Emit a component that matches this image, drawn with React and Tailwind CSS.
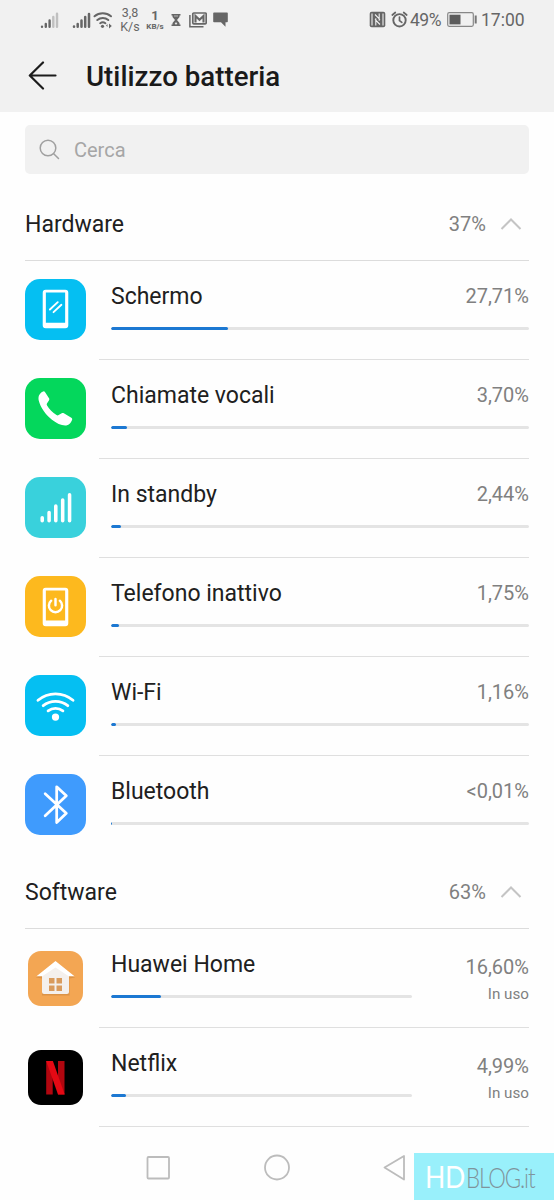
import React, { useState } from 'react';

const hardware = [
  { name: 'Schermo', percent: '27,71%', width: 27.9, icon: 'screen', color: 'bg-[#05bff2]' },
  { name: 'Chiamate vocali', percent: '3,70%', width: 3.8, icon: 'phone', color: 'bg-[#04d75c]' },
  { name: 'In standby', percent: '2,44%', width: 2.4, icon: 'signal', color: 'bg-[#39d1dc]' },
  { name: 'Telefono inattivo', percent: '1,75%', width: 1.8, icon: 'idle', color: 'bg-[#fdb91e]' },
  { name: 'Wi-Fi', percent: '1,16%', width: 1.2, icon: 'wifi', color: 'bg-[#05bff2]' },
  { name: 'Bluetooth', percent: '<0,01%', width: 0.2, icon: 'bluetooth', color: 'bg-[#3f9bfd]' },
];

const software = [
  { name: 'Huawei Home', percent: '16,60%', width: 16.7, icon: 'home', color: 'bg-[#f3a653]', status: 'In uso' },
  { name: 'Netflix', percent: '4,99%', width: 5.1, icon: 'netflix', color: 'bg-black', status: 'In uso' },
];

// Drawings inside the coloured tiles
const glyphs = {
  screen: (
    <svg viewBox="0 0 62 62" className="size-full" fill="none" stroke="#fff" strokeLinecap="round">
      <path d="M21 11h20a3 3 0 0 1 3 3v33a3 3 0 0 1-3 3H21a3 3 0 0 1-3-3V14a3 3 0 0 1 3-3zm0.200 2.700v30.800h19.600V13.700z" fill="#fff" fillRule="evenodd" stroke="none" />
      <path d="M25.300 31l8-7.500M29 33.700l8-7.500" strokeWidth="1.900" />
    </svg>
  ),
  phone: (
    <svg viewBox="0 0 62 62" className="size-full" fill="#fff">
      <path d="M14.300 17.500c.8-1.600 2.400-3.500 4.300-3.900.8-.2 1.300.1 1.700.7l4.100 6.400c.5.800.4 1.500-.1 2.200l-2 3.100c-.4.700-.3 1.300.1 2 2.300 4 5.600 7.300 9.600 9.700.8.500 1.500.5 2.200 0l3.100-1.900c.8-.5 1.500-.4 2.200 0l7.600 4.600c.9.600 1.100 1.300.7 2.200-.9 2.500-2.700 5-5.800 5.600-4.500.5-9.700-2-14.600-5.800-6.200-4.900-11.600-12.300-13.400-19.300-.5-2-.4-3.900.3-5.600z" />
    </svg>
  ),
  signal: (
    <svg viewBox="0 0 62 62" className="size-full" stroke="#fff" strokeWidth="3.600" strokeLinecap="round">
      <path d="M17.500 41.500v3M24.500 36v8.500M31.300 29.500v15M38.300 23.500v21M45.300 18v26.500" />
    </svg>
  ),
  idle: (
    <svg viewBox="0 0 62 62" className="size-full" fill="none" stroke="#fff" strokeLinecap="round">
      <path d="M21 12h20a3 3 0 0 1 3 3v33a3 3 0 0 1-3 3H21a3 3 0 0 1-3-3V15a3 3 0 0 1 3-3zm0.200 2.700v30.500h19.600V14.700z" fill="#fff" fillRule="evenodd" stroke="none" />
      <path d="M26.600 25.100a6.700 6.700 0 1 0 8.800 0M31 23.300v6.500" strokeWidth="2.500" />
    </svg>
  ),
  wifi: (
    <svg viewBox="0 0 62 62" className="size-full" fill="none" stroke="#fff" strokeWidth="2.900" strokeLinecap="round">
      <path d="M13.200 25.700a27.500 27.500 0 0 1 35.600 0M18.500 31.200a20 20 0 0 1 25 0M23.500 36.400a12.500 12.500 0 0 1 15 0" />
      <circle cx="31" cy="42.800" r="3.700" fill="#fff" stroke="none" />
    </svg>
  ),
  bluetooth: (
    <svg viewBox="0 0 62 62" className="size-full" fill="none" stroke="#fff" strokeWidth="2.800" strokeLinecap="round" strokeLinejoin="round">
      <path d="M20.500 20L42 40l-9.800 9.300V13L42 22.200 20.500 42.500" />
    </svg>
  ),
  home: (
    <svg viewBox="0 0 55 55" className="size-full">
      <path d="M8 26.500L27.500 12 47 26.500l-5.500 1V44.500H14V27.500z" fill="#d0893f" opacity=".65" />
      <path d="M14 24L27.500 13 41 24v17a2 2 0 0 1-2 2H16a2 2 0 0 1-2-2z" fill="#f4f0ed" />
      <path d="M27.500 10L46.500 25.200h-5.700L27.500 16.500 14.200 25.200H8.500z" fill="#fff" />
      <path d="M21 27h5.500v5.500H21zM28.500 27H34v5.500h-5.500zM21 34.500h5.500V40H21zM28.500 34.500H34V40h-5.500z" fill="#d99b5d" />
    </svg>
  ),
  netflix: (
    <svg viewBox="0 0 55 55" className="size-full">
      <rect x="18.200" y="11" width="6.500" height="33.500" fill="#b1060f" />
      <rect x="30" y="11" width="6.500" height="33.500" fill="#b1060f" />
      <rect x="18.200" y="0" width="6.700" height="33.500" fill="#e50914" transform="translate(0 11) skewX(19.400)" />
    </svg>
  ),
};

const StatusBar = () => (
  <div className="flex h-[39px] items-center pl-[40px] pr-[29px] text-[#666]">
    <svg width="19" height="18" viewBox="0 0 19 18" stroke="currentColor" strokeWidth="2.400" strokeLinecap="round" className="shrink-0">
      <path d="M2 15.700v.1M5.800 13v2.800M9.600 9.500v6.300" />
      <path d="M13.300 6v9.800M17 2.700v13.100" opacity=".35" />
    </svg>
    <svg width="19" height="18" viewBox="0 0 19 18" stroke="currentColor" strokeWidth="2.500" strokeLinecap="round" className="ml-[13px] shrink-0">
      <path d="M2 15.600v.1M5.700 13v2.700M9.500 9.500v6.200M13.200 6v9.700M17 3v12.700" />
    </svg>
    <svg width="20" height="18" viewBox="0 0 20 18" fill="none" stroke="currentColor" strokeWidth="2" strokeLinecap="round" className="ml-[2px] shrink-0">
      <path d="M1.500 5.300a12.800 12.800 0 0 1 16.500 0M4.300 9a8.600 8.600 0 0 1 11 0M7.200 12.200a4.500 4.500 0 0 1 5.200 0" />
      <circle cx="9.500" cy="15.300" r="1.600" fill="currentColor" stroke="none" />
      <path d="M13 14.500l1.500-1.500v3zM16 12.500l2.800 2.500-2.800 2.500z" fill="currentColor" stroke="none" />
    </svg>
    <div className="ml-[6px] w-[22px] text-center text-[12.500px] leading-[14px]">
      <div>3,8</div>
      <div>K/s</div>
    </div>
    <div className="ml-[4px] w-[20px] text-center font-bold">
      <div className="text-[13px] leading-[13px]">1</div>
      <div className="text-[8px] leading-[9px]">KB/s</div>
    </div>
    <svg width="10" height="12" viewBox="0 0 10 12" className="ml-[6px] shrink-0">
      <path d="M.5 0h9v1.500H8.500v1.500L6 6l2.500 3v1.500h1V12h-9v-1.500h1V9L4 6 1.500 3V1.500h-1z" fill="currentColor" />
      <path d="M3 2h4M4 10l1-1.500L6 10z" stroke="#f1f1f1" strokeWidth=".6" fill="#f1f1f1" />
    </svg>
    <svg width="18" height="16" viewBox="0 0 18 16" fill="none" stroke="currentColor" className="ml-[8px] shrink-0">
      <path d="M.9 3v11.800h13.600" strokeWidth="1.500" />
      <rect x="3.800" y="1" width="13.400" height="10.800" rx="1" strokeWidth="1.700" />
      <path d="M6.500 10.500V4l4 3.800 4-3.800v6.500" strokeWidth="2.100" />
    </svg>
    <svg width="15" height="15" viewBox="0 0 15 15" className="ml-[6px] shrink-0">
      <path d="M1 .5h13q.8 0 .8.800v8.200q0 .8-.8.800h-1.500v4.500L8 10.300H1q-.8 0-.8-.8V1.300Q.2.500 1 .500z" fill="currentColor" />
    </svg>
    <div className="ml-auto flex items-center">
      <svg width="17" height="17" viewBox="0 0 17 17" fill="none">
        <rect x=".7" y=".7" width="15.600" height="15.600" rx="2" fill="currentColor" />
        <path d="M3 2.500v12M14 2.500v12M6.800 7.200v7.300M10.200 2.500v7.300M6 3.500l5 5.200M6 8.300l5 5.200" stroke="#f1f1f1" strokeWidth="1.100" />
      </svg>
      <svg width="17" height="17" viewBox="0 0 17 17" fill="none" stroke="currentColor" strokeLinecap="round" className="ml-[5px]">
        <circle cx="8.500" cy="9.300" r="6.200" strokeWidth="1.900" />
        <path d="M8.500 6v3.600l2.300 1.800M1.300 4l3-2.500M15.700 4l-3-2.500" strokeWidth="1.700" />
      </svg>
      <span className="ml-[2px] w-[32px] whitespace-nowrap text-[17.500px] leading-5 tracking-[-0.5px]">49%</span>
      <svg width="31" height="15" viewBox="0 0 31 15" fill="none" className="ml-[5px]">
        <rect x=".7" y=".7" width="25.600" height="13.600" rx="1.500" stroke="#888" strokeWidth="1.200" />
        <rect x="2.500" y="2.700" width="11" height="9.700" fill="#5c5c5c" />
        <path d="M28.700 3.500v8" stroke="#777" strokeWidth="2" />
      </svg>
      <span className="ml-[3px] w-[44px] whitespace-nowrap text-[17.500px] leading-5">17:00</span>
    </div>
  </div>
);

const SectionHeader = ({ title, total, open, onToggle }) => (
  <button className="flex h-[74px] w-full items-center border-b border-[#dcdcdc] text-left" onClick={onToggle}>
    <span className="flex-1 pt-[3px] text-[23px] text-[#202020]">{title}</span>
    <span className="text-[20px] text-[#808080]">{total}</span>
    <svg width="22" height="14" viewBox="0 0 22 14" fill="none" stroke="#c4c4c4" strokeWidth="2" className={`ml-[14px] mr-[7px] ${open ? '' : 'rotate-180'}`}>
      <path d="M1.500 12L11 2.500l9.500 9.500" />
    </svg>
  </button>
);

const UsageRow = ({ item, last }) => (
  <div className="flex h-[99px]">
    <div className="flex w-[74px] shrink-0 pt-[18px]">
      {item.status ? (
        <div className={`ml-[3px] mt-1 size-[55px] overflow-hidden rounded-[13px] ${item.color}`}>{glyphs[item.icon]}</div>
      ) : (
        <div className={`size-[61px] overflow-hidden rounded-[15px] ${item.color}`}>{glyphs[item.icon]}</div>
      )}
    </div>
    <div className={`flex flex-1 border-b pl-[12px] ${last ? 'border-transparent' : 'border-[#dfdfdf]'}`}>
      <div className="flex-1">
        <div className="flex h-[66px] justify-between pt-[21px] leading-7">
          <span className="whitespace-nowrap pt-px text-[23px] text-[#202020]">{item.name}</span>
          {!item.status && <span className="text-[20px] text-[#808080]">{item.percent}</span>}
        </div>
        <div className="h-[3px] overflow-hidden rounded-full bg-[#e4e4e4]">
          <div className="h-full rounded-full bg-[#1c78d2]" style={{ width: `${item.width}%` }} />
        </div>
      </div>
      {item.status && (
        <div className="w-[117px] pt-6 text-right text-[#808080]">
          <div className="text-[20px] leading-7">{item.percent}</div>
          <div className="text-[15.200px] leading-[26px]">{item.status}</div>
        </div>
      )}
    </div>
  </div>
);

const App = () => {
  const [hardwareOpen, setHardwareOpen] = useState(true);
  const [softwareOpen, setSoftwareOpen] = useState(true);

  return (
    <div className="relative flex h-[1200px] w-[554px] flex-col overflow-hidden bg-[#fefefe] font-['Roboto',sans-serif]">
      <header className="h-[112px] shrink-0 bg-[#f1f1f1]">
        <StatusBar />
        <div className="flex h-[73px] items-center pl-[28px]">
          <svg width="29" height="30" viewBox="0 0 29 30" fill="none" stroke="#1c1c1c" strokeWidth="2.200" strokeLinecap="round" strokeLinejoin="round">
            <path d="M15 1.500L1.800 14.500 15 27.500M2 14.500h25.500" />
          </svg>
          <h1 className="ml-[29px] pt-0.5 text-[27.700px] font-medium leading-8 text-[#1a1a1a]">Utilizzo batteria</h1>
        </div>
      </header>

      <main className="flex-1 px-[25px]">
        <div className="mt-[13px] flex h-[49px] items-center rounded-[5px] bg-[#f1f1f1] pl-[14px]">
          <svg width="21" height="21" viewBox="0 0 21 21" fill="none" stroke="#a0a0a0" strokeWidth="1.500" strokeLinecap="round">
            <circle cx="9" cy="9" r="7.800" />
            <path d="M14.700 14.700l4.800 4.800" />
          </svg>
          <input className="ml-[14px] flex-1 bg-transparent text-[20px] outline-none placeholder:text-[#a6a6a6]" placeholder="Cerca" />
        </div>

        <div className="mt-[13px]">
          <SectionHeader title="Hardware" total="37%" open={hardwareOpen} onToggle={() => setHardwareOpen(!hardwareOpen)} />
          {hardwareOpen && hardware.map((item, i) => (
            <UsageRow key={item.name} item={item} last={i === hardware.length - 1} />
          ))}
        </div>

        <div>
          <SectionHeader title="Software" total="63%" open={softwareOpen} onToggle={() => setSoftwareOpen(!softwareOpen)} />
          {softwareOpen && software.map((item) => (
            <UsageRow key={item.name} item={item} />
          ))}
        </div>
      </main>

      <nav className="flex h-[73px] shrink-0 items-center pl-[145px] pt-[8px]">
        <svg width="26" height="26" viewBox="0 0 26 26" fill="none" stroke="#bcbcbc" strokeWidth="1.800">
          <rect x="2.500" y="2" width="21.500" height="21.500" rx="1" />
        </svg>
        <svg width="28" height="28" viewBox="0 0 28 28" fill="none" stroke="#bcbcbc" strokeWidth="1.800" className="ml-[92px]">
          <circle cx="14" cy="13.500" r="12" />
        </svg>
        <svg width="26" height="28" viewBox="0 0 26 28" fill="none" stroke="#bcbcbc" strokeWidth="1.800" strokeLinejoin="round" className="ml-[90px]">
          <path d="M3.500 13.500L23 2v23.500z" />
        </svg>
      </nav>

      {/* Site badge over the navigation bar */}
      <div className="absolute bottom-0 right-0 flex h-[47px] w-[140px] items-baseline overflow-hidden whitespace-nowrap bg-[#99f0fb] pl-[11px] pt-[4px] font-['Lato',sans-serif]">
        <span className="w-[41px] origin-left scale-x-[0.86] text-[31px] leading-[38px] tracking-[-0.500px] text-white">HD</span>
        <span className="origin-left scale-x-[0.84] text-[26.500px] font-light leading-[38px] tracking-[-1.300px] text-[#7f949c]">BLOG.it</span>
      </div>
    </div>
  );
};

export default App;
